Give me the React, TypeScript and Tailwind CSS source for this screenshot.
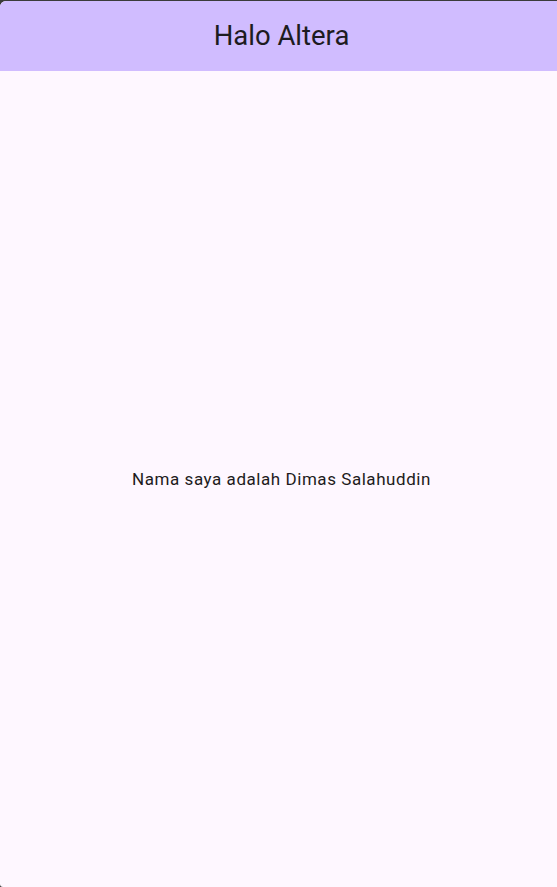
import React from "react";

export default function App() {
  return (
    <div className="w-[557px] h-[887px] bg-[#3b3b3b] pt-[1px]" style={{ fontFamily: "Roboto, 'Noto Sans', sans-serif" }}>
      <div className="h-[886px] flex flex-col bg-[#fef7ff] rounded-tl-[6px] rounded-bl-[3px] overflow-hidden">
        <div className="h-[70px] shrink-0 bg-[#d0bcff] flex items-center justify-center pl-[6px]">
          <span className="text-[27.5px] leading-[34px] text-[#1d1b20]">Halo Altera</span>
        </div>
        <div className="flex-1 flex items-center justify-center pl-[6px] pt-[1px]">
          <span className="text-[17px] leading-[25px] tracking-[0.55px] text-[#1d1b20]">Nama saya adalah Dimas Salahuddin</span>
        </div>
      </div>
    </div>
  );
}
